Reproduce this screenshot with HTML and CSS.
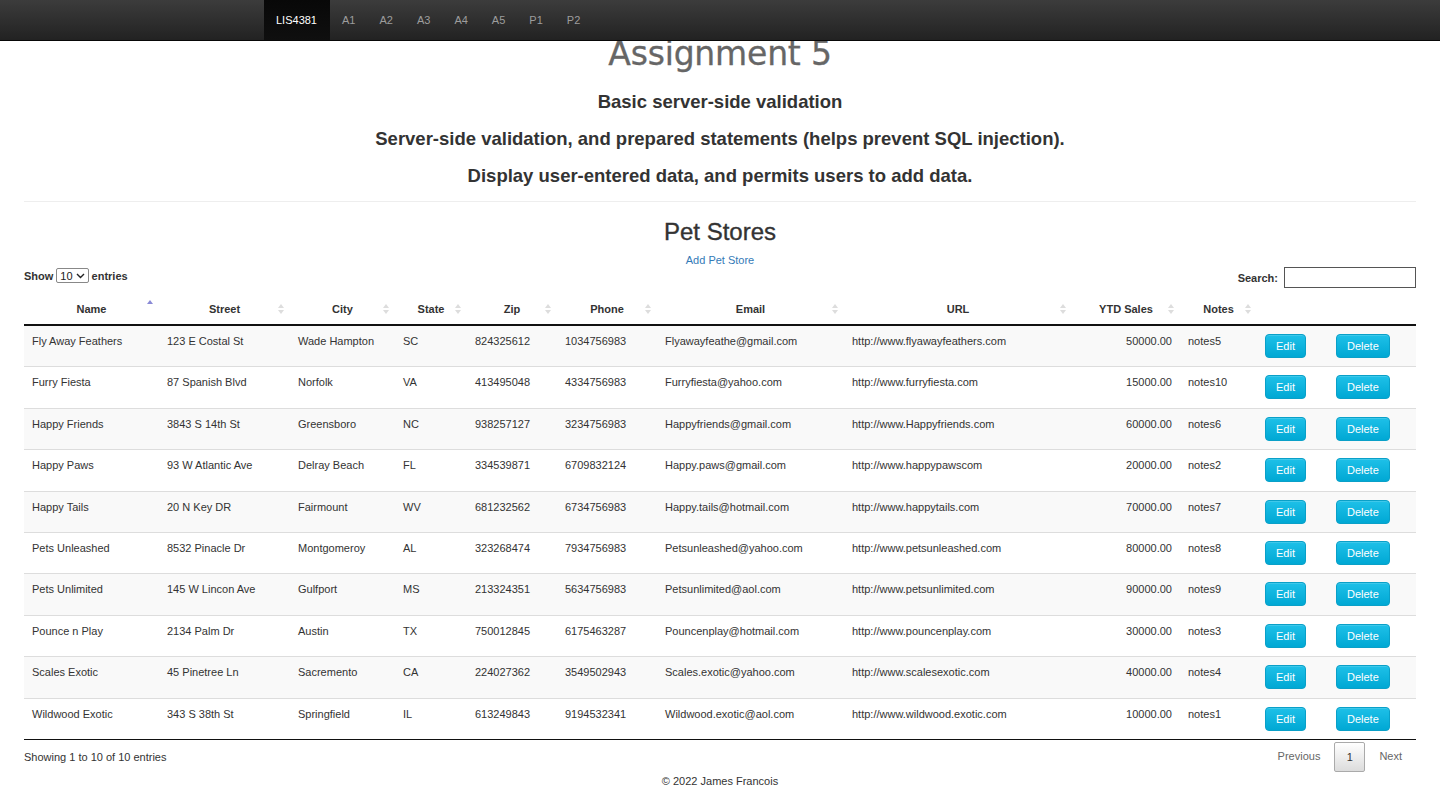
FILE: index.html
```html
<!DOCTYPE html>
<html lang="en">
<head>
<meta charset="utf-8">
<title>LIS4381 - Assignment 5</title>
<link rel="stylesheet" href="styles.css">
</head>
<body>
<nav class="navbar">
  <div class="nav-inner">
    <a class="nav-item active" href="#">LIS4381</a>
    <a class="nav-item" href="#">A1</a>
    <a class="nav-item" href="#">A2</a>
    <a class="nav-item" href="#">A3</a>
    <a class="nav-item" href="#">A4</a>
    <a class="nav-item" href="#">A5</a>
    <a class="nav-item" href="#">P1</a>
    <a class="nav-item" href="#">P2</a>
  </div>
</nav>

<main class="page">
  <header class="intro">
    <h1 class="title">Assignment 5</h1>
    <h4 class="sub">Basic server-side validation</h4>
    <h4 class="sub">Server-side validation, and prepared statements (helps prevent SQL injection).</h4>
    <h4 class="sub">Display user-entered data, and permits users to add data.</h4>
  </header>
  <hr class="divider">

  <section class="stores">
    <h2 class="stores-title">Pet Stores</h2>
    <div class="add-link"><a href="#">Add Pet Store</a></div>

    <div class="controls">
      <label class="length">Show
        <span class="select">10 <svg width="9" height="6" viewBox="0 0 9 6"><path d="M1 1l3.5 3.5L8 1" fill="none" stroke="#222" stroke-width="1.4"/></svg></span>
        entries</label>
      <label class="search">Search: <input type="text" class="search-input"></label>
    </div>

    <table class="data">
      <colgroup>
        <col style="width:135px"><col style="width:131px"><col style="width:105px"><col style="width:72px">
        <col style="width:90px"><col style="width:100px"><col style="width:187px"><col style="width:228px">
        <col style="width:108px"><col style="width:77px"><col style="width:71px"><col style="width:88px">
      </colgroup>
      <thead>
        <tr>
          <th><div class="th"><span></span><span>Name</span><span class="sort asc"></span></div></th>
          <th><div class="th"><span></span><span>Street</span><span class="sort"></span></div></th>
          <th><div class="th"><span></span><span>City</span><span class="sort"></span></div></th>
          <th><div class="th"><span></span><span>State</span><span class="sort"></span></div></th>
          <th><div class="th"><span></span><span>Zip</span><span class="sort"></span></div></th>
          <th><div class="th"><span></span><span>Phone</span><span class="sort"></span></div></th>
          <th><div class="th"><span></span><span>Email</span><span class="sort"></span></div></th>
          <th><div class="th"><span></span><span>URL</span><span class="sort"></span></div></th>
          <th><div class="th"><span></span><span>YTD Sales</span><span class="sort"></span></div></th>
          <th><div class="th"><span></span><span>Notes</span><span class="sort"></span></div></th>
          <th></th>
          <th></th>
        </tr>
      </thead>
      <tbody>
        <tr><td>Fly Away Feathers</td><td>123 E Costal St</td><td>Wade Hampton</td><td>SC</td><td>824325612</td><td>1034756983</td><td>Flyawayfeathe@gmail.com</td><td>http://www.flyawayfeathers.com</td><td class="num">50000.00</td><td>notes5</td><td><button class="btn">Edit</button></td><td><button class="btn">Delete</button></td></tr>
        <tr><td>Furry Fiesta</td><td>87 Spanish Blvd</td><td>Norfolk</td><td>VA</td><td>413495048</td><td>4334756983</td><td>Furryfiesta@yahoo.com</td><td>http://www.furryfiesta.com</td><td class="num">15000.00</td><td>notes10</td><td><button class="btn">Edit</button></td><td><button class="btn">Delete</button></td></tr>
        <tr><td>Happy Friends</td><td>3843 S 14th St</td><td>Greensboro</td><td>NC</td><td>938257127</td><td>3234756983</td><td>Happyfriends@gmail.com</td><td>http://www.Happyfriends.com</td><td class="num">60000.00</td><td>notes6</td><td><button class="btn">Edit</button></td><td><button class="btn">Delete</button></td></tr>
        <tr><td>Happy Paws</td><td>93 W Atlantic Ave</td><td>Delray Beach</td><td>FL</td><td>334539871</td><td>6709832124</td><td>Happy.paws@gmail.com</td><td>http://www.happypawscom</td><td class="num">20000.00</td><td>notes2</td><td><button class="btn">Edit</button></td><td><button class="btn">Delete</button></td></tr>
        <tr><td>Happy Tails</td><td>20 N Key DR</td><td>Fairmount</td><td>WV</td><td>681232562</td><td>6734756983</td><td>Happy.tails@hotmail.com</td><td>http://www.happytails.com</td><td class="num">70000.00</td><td>notes7</td><td><button class="btn">Edit</button></td><td><button class="btn">Delete</button></td></tr>
        <tr><td>Pets Unleashed</td><td>8532 Pinacle Dr</td><td>Montgomeroy</td><td>AL</td><td>323268474</td><td>7934756983</td><td>Petsunleashed@yahoo.com</td><td>http://www.petsunleashed.com</td><td class="num">80000.00</td><td>notes8</td><td><button class="btn">Edit</button></td><td><button class="btn">Delete</button></td></tr>
        <tr><td>Pets Unlimited</td><td>145 W Lincon Ave</td><td>Gulfport</td><td>MS</td><td>213324351</td><td>5634756983</td><td>Petsunlimited@aol.com</td><td>http://www.petsunlimited.com</td><td class="num">90000.00</td><td>notes9</td><td><button class="btn">Edit</button></td><td><button class="btn">Delete</button></td></tr>
        <tr><td>Pounce n Play</td><td>2134 Palm Dr</td><td>Austin</td><td>TX</td><td>750012845</td><td>6175463287</td><td>Pouncenplay@hotmail.com</td><td>http://www.pouncenplay.com</td><td class="num">30000.00</td><td>notes3</td><td><button class="btn">Edit</button></td><td><button class="btn">Delete</button></td></tr>
        <tr><td>Scales Exotic</td><td>45 Pinetree Ln</td><td>Sacremento</td><td>CA</td><td>224027362</td><td>3549502943</td><td>Scales.exotic@yahoo.com</td><td>http://www.scalesexotic.com</td><td class="num">40000.00</td><td>notes4</td><td><button class="btn">Edit</button></td><td><button class="btn">Delete</button></td></tr>
        <tr><td>Wildwood Exotic</td><td>343 S 38th St</td><td>Springfield</td><td>IL</td><td>613249843</td><td>9194532341</td><td>Wildwood.exotic@aol.com</td><td>http://www.wildwood.exotic.com</td><td class="num">10000.00</td><td>notes1</td><td><button class="btn">Edit</button></td><td><button class="btn">Delete</button></td></tr>
      </tbody>
    </table>

    <div class="table-footer">
      <div class="info">Showing 1 to 10 of 10 entries</div>
      <div class="paging">
        <span class="page-link">Previous</span>
        <span class="page-current">1</span>
        <span class="page-link">Next</span>
      </div>
    </div>
  </section>

  <footer class="footer">© 2022 James Francois</footer>
</main>
</body>
</html>
```

FILE: styles.css
```css
* { box-sizing: border-box; }
html, body { margin: 0; padding: 0; }
body {
  font-family: "Liberation Sans", Arial, Helvetica, sans-serif;
  font-size: 11px;
  color: #333;
  background: #fff;
}

.navbar {
  position: fixed;
  top: 0; left: 0; right: 0;
  height: 41px;
  background: linear-gradient(to bottom, #3c3c3c 0%, #222 100%);
  border-bottom: 1px solid #080808;
  z-index: 10;
}
.nav-inner {
  width: 912px;
  margin: 0 auto;
  display: flex;
  height: 40px;
}
.nav-item {
  display: flex;
  align-items: center;
  padding: 0 12px;
  color: #9d9d9d;
  text-decoration: none;
  font-size: 11px;
}
.nav-item.active {
  background: linear-gradient(to bottom, #080808 0%, #0f0f0f 100%);
  color: #fff;
  padding: 0 13px 0 12px;
}

.page { padding: 0 24px; }

.intro { text-align: center; padding-top: 34px; }
.title {
  margin: 0 0 9px;
  font-family: "DejaVu Sans", Verdana, sans-serif;
  font-weight: normal;
  font-size: 33px;
  line-height: 40px;
  color: #666;
  letter-spacing: -0.2px;
  -webkit-text-stroke: 0.3px #666;
}
.sub {
  margin: 0;
  font-size: 18.5px;
  line-height: 37px;
  font-weight: bold;
  color: #333;
}
.divider {
  border: 0;
  border-top: 1px solid #eee;
  margin: 7px 0 0;
}

.stores-title {
  text-align: center;
  margin: 16px 0 0;
  font-size: 24px;
  line-height: 28px;
  font-weight: normal;
  color: #333;
  -webkit-text-stroke: 0.35px #333;
}
.add-link {
  text-align: center;
  margin-top: 7px;
  line-height: 14px;
}
.add-link a { color: #337ab7; text-decoration: none; font-size: 11px; }

.controls {
  display: flex;
  justify-content: space-between;
  align-items: center;
  margin-top: 0;
  font-weight: bold;
}
.length { display: flex; align-items: center; gap: 3px; margin-top: -4px; }
.select {
  display: inline-flex;
  align-items: center;
  gap: 3px;
  border: 1px solid #888;
  border-radius: 2px;
  padding: 0 3px;
  height: 15px;
  font-weight: normal;
  color: #222;
  font-size: 11px;
}
.search { display: flex; align-items: center; gap: 6px; }
.search-input {
  width: 132px;
  height: 21px;
  border: 1px solid #555;
  border-radius: 0;
  padding: 0 4px;
  margin: 0;
}

.data {
  width: 100%;
  border-collapse: collapse;
  table-layout: fixed;
  margin-top: 4px;
}
.data th {
  padding: 10px 8px 8px;
  font-weight: bold;
  border-bottom: 2px solid #111;
  line-height: 14px;
}
.th {
  display: grid;
  grid-template-columns: 1fr auto 1fr;
  align-items: center;
}
.sort {
  justify-self: end;
  display: flex;
  flex-direction: column;
  gap: 2px;
  margin-right: -2px;
}
.sort::before, .sort::after {
  content: "";
  display: block;
  width: 0; height: 0;
  border-left: 3px solid transparent;
  border-right: 3px solid transparent;
}
.sort::before { border-bottom: 4px solid #ddd; }
.sort::after { border-top: 4px solid #ddd; }
.sort.asc { transform: translateY(-4px); }
.sort.asc::before { border-bottom-color: #8a8ad6; }
.sort.asc::after { border-top-color: transparent; }

.data td {
  padding: 8px 8px 8.4px;
  vertical-align: top;
  line-height: 14px;
  border-top: 1px solid #ddd;
  white-space: nowrap;
  overflow: hidden;
  color: #333;
}
.data tbody tr:first-child td { border-top: 0; }
.data tbody tr:nth-child(odd) td { background: #f9f9f9; }
.data tbody tr:last-child td { border-bottom: 1px solid #111; }
.data td.num { text-align: right; }

.btn {
  display: inline-block;
  height: 24px;
  padding: 0 10px;
  font-family: inherit;
  font-size: 11px;
  color: #fff;
  background: linear-gradient(to bottom, #1ec0e8 0%, #00a8d4 100%);
  border: 1px solid #0aa0c8;
  border-radius: 4px;
  box-shadow: inset 0 1px 0 rgba(255,255,255,0.15);
  cursor: pointer;
}

.table-footer {
  display: flex;
  justify-content: space-between;
  align-items: center;
  padding-top: 2px;
}
.info { color: #333; }
.paging { display: flex; align-items: center; }
.page-link { color: #666; padding: 0 14px; line-height: 29px; }
.page-current {
  width: 31px;
  height: 30px;
  display: flex;
  align-items: center;
  justify-content: center;
  border: 1px solid #aaa;
  border-radius: 2px;
  background: linear-gradient(to bottom, #fff 0%, #dcdcdc 100%);
  color: #333;
}

.footer {
  text-align: center;
  padding: 2px 0 0;
  line-height: 14px;
}
```
